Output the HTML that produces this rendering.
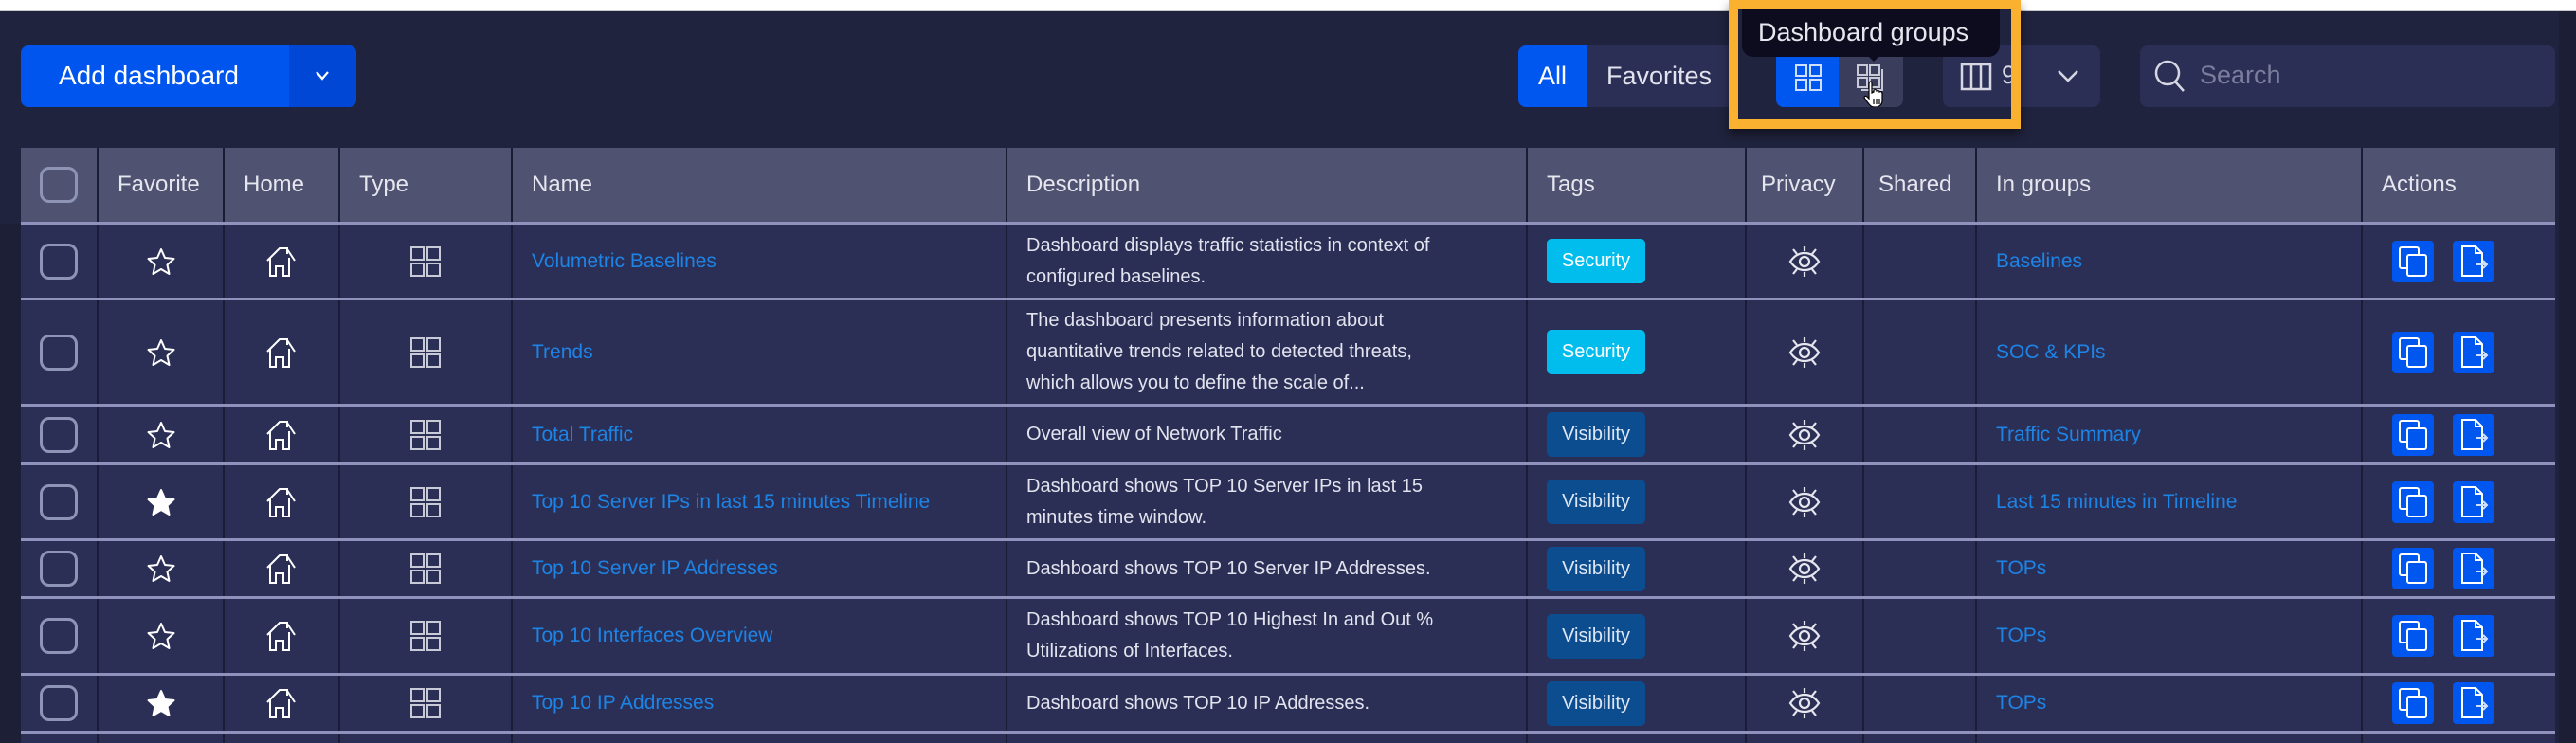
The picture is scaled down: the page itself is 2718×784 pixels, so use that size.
<!DOCTYPE html>
<html style="width:2718px;height:784px;overflow:hidden"><head><meta charset="utf-8"><style>
*{box-sizing:border-box;margin:0;padding:0}
body{width:2718px;height:784px;overflow:hidden;background:#20233d;font-family:"Liberation Sans",sans-serif;position:relative;color:#e2e3ee}
.abs{position:absolute}
.row{position:absolute;left:22px;width:2674px;display:flex;background:#2b2f55;border-bottom:3px solid #8e92bc}
.row.h{background:#4f5270}
.c{border-left:2px solid #1b1c36;display:flex;align-items:center;padding-left:20px;font-size:21px;height:100%;overflow:hidden}
.c:first-child{border-left:none}
.h .c{font-size:24px;color:#e6e6ef}
.cc{justify-content:center;padding-left:0}
.cb{width:40px;height:38px;border:3px solid #8d94b5;border-radius:10px}
a{color:#1d84e6;text-decoration:none}
.desc{line-height:33px;color:#e2e3ee;font-size:20px}
.tag{width:104px;height:47px;border-radius:5px;display:flex;align-items:center;justify-content:center;font-size:20px;color:#fff}
.sec{background:#00bdee}.vis{background:#0c4d8f;color:#dde6f5}
.btn{width:44px;height:44px;background:#0057f0;border-radius:4px;display:flex;align-items:center;justify-content:center;margin-right:20px}
</style></head><body>
<div class="abs" style="left:0;top:0;width:2718px;height:12px;background:#fff;border-bottom:1px solid #c8c8cc"></div>
<div class="abs" style="left:0;top:236px;width:22px;height:548px;background:#1d1f37"></div>
<div class="abs" style="left:2700px;top:12px;width:18px;height:772px;background:#1c1e35"></div>

<div class="abs" style="left:22px;top:48px;width:354px;height:65px;background:#0055ee;border-radius:8px;overflow:hidden">
<div class="abs" style="left:283px;top:0;width:71px;height:65px;background:#0047d6"></div>
<div class="abs" style="left:40px;top:16px;font-size:28px;color:#fff">Add dashboard</div>
<svg class="abs" style="left:308px;top:24px" width="20" height="16" viewBox="0 0 20 16"><path d="M4 4l6 7 6-7" fill="none" stroke="#fff" stroke-width="2.2"/></svg>
</div>

<div class="abs" style="left:1602px;top:48px;width:230px;height:65px;background:#2c2f55;border-radius:8px;overflow:hidden">
<div class="abs" style="left:0;top:0;width:72px;height:65px;background:#0057f0"></div>
<div class="abs" style="left:21px;top:17px;font-size:27px;color:#fff">All</div>
<div class="abs" style="left:93px;top:17px;font-size:27px;color:#e2e3ee">Favorites</div>
</div>

<div class="abs" style="left:1874px;top:48px;width:134px;height:65px;background:#3a3d5c;border-radius:8px;overflow:hidden">
<div class="abs" style="left:0;top:0;width:66px;height:65px;background:#0057f0"></div>
<svg class="abs" style="left:20px;top:20px" width="28" height="28" viewBox="0 0 28 28" fill="none" stroke="#cfe0ff" stroke-width="2"><rect x="1" y="1" width="11" height="11"/><rect x="16" y="1" width="11" height="11"/><rect x="1" y="16" width="11" height="11"/><rect x="16" y="16" width="11" height="11"/></svg>
<svg class="abs" style="left:85px;top:20px" width="30" height="30" viewBox="0 0 30 30" fill="none" stroke="#c8c9d6" stroke-width="2"><rect x="1" y="1" width="10" height="10"/><rect x="14" y="1" width="10" height="10"/><rect x="1" y="14" width="10" height="10"/><rect x="14" y="14" width="10" height="10"/><path d="M27 5v22H5"/></svg>
<svg class="abs" style="left:92px;top:36px" width="24" height="30" viewBox="0 0 24 30"><path d="M7 2c2 0 2 1 2 3v9l2-1v-2c2-1 3 0 3 1 2-1 3 0 3 1 2-1 3 0 3 2v7c0 4-3 7-7 7h-2c-3 0-5-3-8-7l-2-3c0-2 2-2 3-1l2 2V5c0-2 1-3 2-3z" fill="#fff" stroke="#000" stroke-width="1.2"/><path d="M11 20v6M14 20v6M17 20v6" stroke="#000" stroke-width="1.2"/></svg>
</div>

<div class="abs" style="left:2050px;top:48px;width:166px;height:65px;background:#2c2f55;border-radius:8px">
<svg class="abs" style="left:18px;top:18px" width="34" height="30" viewBox="0 0 34 30" fill="none" stroke="#d6d7e2" stroke-width="2.5"><rect x="2" y="2" width="30" height="26"/><path d="M12 2v26M22 2v26"/></svg>
<div class="abs" style="left:62px;top:16px;font-size:27px;color:#d6d7e2">9</div>
<svg class="abs" style="left:118px;top:22px" width="28" height="20" viewBox="0 0 28 20"><path d="M4 5l10 10 10-10" fill="none" stroke="#d6d7e2" stroke-width="2.5"/></svg>
</div>

<div class="abs" style="left:2258px;top:48px;width:438px;height:65px;background:#2c2f55;border-radius:8px">
<svg class="abs" style="left:14px;top:14px" width="36" height="38" viewBox="0 0 36 38" fill="none" stroke="#d6d7e2" stroke-width="2.5"><circle cx="15" cy="15" r="12"/><path d="M23 24l9 10"/></svg>
<div class="abs" style="left:63px;top:16px;font-size:27px;color:#7a7e9c">Search</div>
</div>

<div class="abs" style="left:1824px;top:0;width:308px;height:136px;border:10px solid #fbb130;box-shadow:0 6px 10px rgba(0,0,0,.45)"></div>
<div class="abs" style="left:1834px;top:10px;width:288px;height:38px;background:#20233d"></div>
<div class="abs" style="left:1838px;top:10px;width:272px;height:50px;background:#0d0b1e;border-radius:0 0 12px 12px;font-size:27px;color:#e6e6ee;padding:9px 0 0 17px">Dashboard groups</div>
<div class="abs" style="left:1972px;top:60px;width:0;height:0;border-left:5px solid transparent;border-right:5px solid transparent;border-top:5px solid #0d0b1e"></div>

<div class="row h" style="top:156px;height:81px">
<div class="c cc" style="width:80px"><div class="cb"></div></div>
<div class="c" style="width:133px">Favorite</div>
<div class="c" style="width:122px">Home</div>
<div class="c" style="width:182px">Type</div>
<div class="c" style="width:522px">Name</div>
<div class="c" style="width:549px">Description</div>
<div class="c" style="width:231px">Tags</div>
<div class="c" style="width:124px;padding-left:15px">Privacy</div>
<div class="c" style="width:119px;padding-left:15px">Shared</div>
<div class="c" style="width:407px">In groups</div>
<div class="c" style="width:205px">Actions</div>
</div>

<div id="rows"></div>
<script>
var star='<svg width="30" height="30" viewBox="0 0 30 30"><path d="M15 2l4 9 9.5 1-7 6.5 2 9.5L15 23l-8.5 5 2-9.5-7-6.5 9.5-1z" fill="none" stroke="#fff" stroke-width="2" stroke-linejoin="round"/></svg>';
var starF='<svg width="30" height="30" viewBox="0 0 30 30"><path d="M15 2l4 9 9.5 1-7 6.5 2 9.5L15 23l-8.5 5 2-9.5-7-6.5 9.5-1z" fill="#fff" stroke="#fff" stroke-width="2" stroke-linejoin="round"/></svg>';
var house='<svg width="32" height="34" viewBox="0 0 32 34" fill="none" stroke="#fff" stroke-width="2"><path d="M1 16L14 3h8v6M22 4l8 12M4 13v19h6V22h8v10h6V13"/></svg>';
var grid='<svg width="32" height="32" viewBox="0 0 32 32" fill="none" stroke="#c8cad8" stroke-width="2"><rect x="1" y="1" width="13" height="13"/><rect x="18" y="1" width="13" height="13"/><rect x="1" y="18" width="13" height="13"/><rect x="18" y="18" width="13" height="13"/></svg>';
var eye='<svg width="34" height="34" viewBox="0 0 34 34" fill="none" stroke="#e6e6ee" stroke-width="2.2"><path d="M2 17c4-6 9-9 15-9s11 3 15 9c-4 6-9 9-15 9S6 23 2 17z"/><circle cx="17" cy="17" r="5"/><path d="M17 1v5M17 28v5M5 4l4 5M29 4l-4 5M5 30l4-5M29 30l-4-5"/></svg>';
var copy='<div class="btn"><svg width="32" height="34" viewBox="0 0 32 34" fill="none" stroke="#fff" stroke-width="2"><rect x="2" y="2" width="20" height="22" rx="2"/><rect x="10" y="10" width="20" height="22" rx="2" fill="#0057f0"/></svg></div>';
var exp='<div class="btn"><svg width="32" height="36" viewBox="0 0 32 36" fill="none" stroke="#fff" stroke-width="2"><path d="M4 2h14l7 7v24H4z M18 2v7h7"/><path d="M18 21h12M26 17l4 4-4 4" stroke="#cfe0ff"/></svg></div>';
var rows=[
[237,80,star,'Volumetric Baselines','Dashboard displays traffic statistics in context of<br>configured baselines.','sec','Security','Baselines'],
[317,112,star,'Trends','The dashboard presents information about<br>quantitative trends related to detected threats,<br>which allows you to define the scale of...','sec','Security','SOC &amp; KPIs'],
[429,62,star,'Total Traffic','Overall view of Network Traffic','vis','Visibility','Traffic Summary'],
[491,80,starF,'Top 10 Server IPs in last 15 minutes Timeline','Dashboard shows TOP 10 Server IPs in last 15<br>minutes time window.','vis','Visibility','Last 15 minutes in Timeline'],
[571,61,star,'Top 10 Server IP Addresses','Dashboard shows TOP 10 Server IP Addresses.','vis','Visibility','TOPs'],
[632,81,star,'Top 10 Interfaces Overview','Dashboard shows TOP 10 Highest In and Out %<br>Utilizations of Interfaces.','vis','Visibility','TOPs'],
[713,61,starF,'Top 10 IP Addresses','Dashboard shows TOP 10 IP Addresses.','vis','Visibility','TOPs'],
[774,10,star,'','','','','']
];
var h='';
rows.forEach(function(r){
h+='<div class="row" style="top:'+r[0]+'px;height:'+r[1]+'px'+(r[3]?'':';border-bottom:none')+'">'+
'<div class="c cc" style="width:80px">'+(r[3]?'<div class="cb"></div>':'')+'</div>'+
'<div class="c cc" style="width:133px">'+(r[3]?r[2]:'')+'</div>'+
'<div class="c cc" style="width:122px">'+(r[3]?house:'')+'</div>'+
'<div class="c cc" style="width:182px">'+(r[3]?grid:'')+'</div>'+
'<div class="c" style="width:522px"><a>'+r[3]+'</a></div>'+
'<div class="c desc" style="width:549px">'+r[4]+'</div>'+
'<div class="c" style="width:231px">'+(r[5]?'<div class="tag '+r[5]+'">'+r[6]+'</div>':'')+'</div>'+
'<div class="c cc" style="width:124px">'+(r[3]?eye:'')+'</div>'+
'<div class="c" style="width:119px"></div>'+
'<div class="c" style="width:407px"><a>'+r[7]+'</a></div>'+
'<div class="c" style="width:205px;padding-left:31px">'+(r[3]?copy+exp:'')+'</div>'+
'</div>';
});
document.getElementById('rows').innerHTML=h;
</script>
</body></html>
